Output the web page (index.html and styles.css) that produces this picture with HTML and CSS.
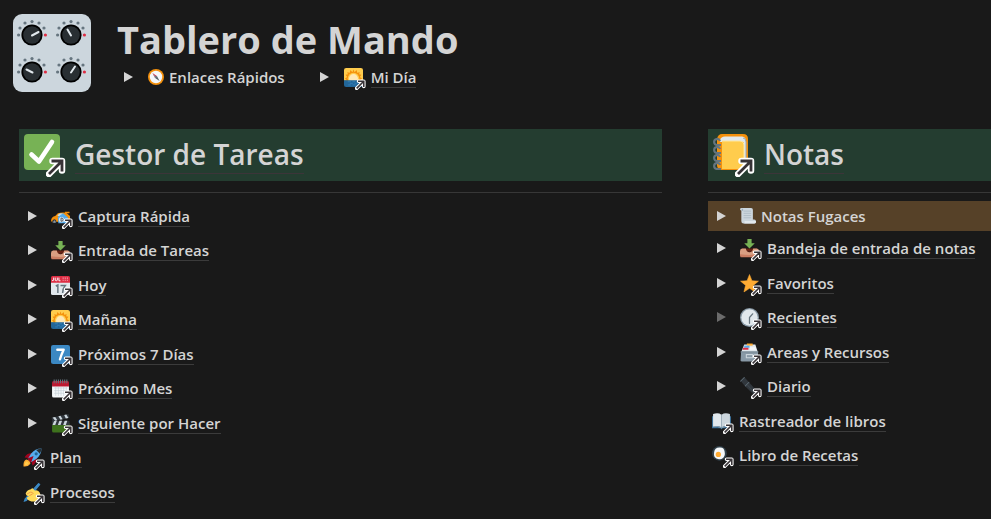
FILE: index.html
```html
<!DOCTYPE html>
<html lang="es">
<head>
<meta charset="utf-8">
<meta name="viewport" content="width=device-width, initial-scale=1">
<title>Tablero de Mando</title>
<link rel="stylesheet" href="styles.css">
</head>
<body>
<svg class="sprite" aria-hidden="true">
  <symbol id="tri" viewBox="0 0 9 10"><path d="M0 0L9 5L0 10Z" fill="currentColor"/></symbol>
  <symbol id="arrow" viewBox="0 0 20 20">
    <path d="M3 17L15.500 4.500M6.500 4H16V13.500" fill="none" stroke="#fff" stroke-width="6.500" stroke-linecap="round" stroke-linejoin="round"/>
    <path d="M3 17L15.500 4.500M5.500 4H16V14.500" fill="none" stroke="#373236" stroke-width="2.800"/>
  </symbol>
  <symbol id="dial" viewBox="-15 -15 30 30">
    <g fill="#66757f"><circle cx="-13.400" cy="0" r="1.600"/><circle cx="-12" cy="-7" r="1.600"/><circle cx="-7" cy="-12" r="1.600"/><circle cx="0" cy="-13.400" r="1.600"/><circle cx="7" cy="-12" r="1.600"/><circle cx="12" cy="-7" r="1.600"/></g>
    <circle cx="13.400" cy="0" r="1.600" fill="#dd2e44"/>
    <circle r="10.600"/><circle r="8.800" fill="#292f33"/>
  </symbol>
  <symbol id="compass" viewBox="0 0 36 36">
    <circle cx="18" cy="18" r="18" fill="#f4900c"/><circle cx="18" cy="18" r="14" fill="#f5f8fa"/>
    <path d="M10 9L20 16L16 20Z" fill="#dd2e44"/><path d="M26 27L20 16L16 20Z" fill="#55606a"/><path d="M10 9L18 18L16 20Z" fill="#8899a6"/><circle cx="18" cy="18" r="2" fill="#66757f"/>
  </symbol>
  <symbol id="sunrise" viewBox="0 0 36 36">
    <path d="M4 0H32Q36 0 36 4V24H0V4Q0 0 4 0Z" fill="#ffcc4d"/>
    <path d="M18 3L20 8L24 4L25 9L30 8L28.500 12L33 13L30 17L34 20L30 24H6L2 20L6 17L3 13L7.500 12L6 8L11 9L12 4L16 8Z" fill="#f4900c"/>
    <circle cx="18" cy="20" r="11" fill="#ffcc4d"/><circle cx="18" cy="20" r="8.500" fill="#ffe8b6"/>
    <path d="M0 23H36V32Q36 36 32 36H4Q0 36 0 32Z" fill="#226699"/>
    <path d="M7 26H13M16 26H21M24 26H29M11 29H17M20 29H25M8 32H13M16 32H22" stroke="#55acee" stroke-opacity=".6"/>
  </symbol>
  <symbol id="check" viewBox="0 0 36 36">
    <rect width="36" height="36" rx="4" fill="#77b255"/>
    <path d="M7.500 20.500L15 27.500L28 8" fill="none" stroke="#fff" stroke-width="4.600" stroke-linecap="round" stroke-linejoin="round"/>
  </symbol>
  <symbol id="notebook" viewBox="0 0 36 36">
    <path d="M9 0H30Q35 0 35 5V31Q35 36 30 36H9Q4 36 4 31V5Q5 0 9 0Z" fill="#f4900c"/>
    <path d="M12 2.500H29Q33 3 33 7V32Q33 34 31 34V8H9Q6 8 7 6Q8 2.500 12 2.500Z" fill="#e1e8ed"/>
    <path d="M9 7H27Q31 7 31 11V35H9Z" fill="#ffcc4d"/><path d="M9 7H27Q31 7 31 11V31" fill="none" stroke="#ffe8a0"/>
    <path d="M30 4Q33 4 33 8V31" stroke="#99aab5" fill="none"/>
    <path id="ring" d="M7 7A3 3 0 1 0 4 11H8" fill="none" stroke="#66757f" stroke-width="2.200"/>
    <use href="#ring" y="8"/><use href="#ring" y="16"/><use href="#ring" y="24"/>
  </symbol>
  <symbol id="car" viewBox="0 0 36 36">
    <path d="M0 26Q1 18 8 17L13 12Q21 9 29 11L36 17V27Q26 30 13 28L2 29Z" fill="#f4900c"/>
    <path d="M12 17L15 13Q19 11 23 13L21 17Z" fill="#bbddf5"/>
    <path d="M13 19L23 12L32 20V31H14Z" fill="#55acee"/><circle cx="20" cy="24" r="5" fill="#e1e8ed"/><path d="M19 21H20Q23 21 23 24Q23 27 20 27H19Z" fill="none" stroke="#31373d" stroke-width="1.500"/>
    <path d="M2 30Q2 23 7 23Q11 24 10 30Z" fill="#31373d"/><path d="M4 30Q4 26 7 25Q9 26 9 30Z" fill="#8899a6"/><path d="M26 9H35V12H27Z" fill="#f4900c"/>
  </symbol>
  <symbol id="inbox" viewBox="0 0 36 36">
    <path d="M4 18H32L36 24H0Z" fill="#662113"/>
    <path d="M0 23Q0 18 4 18H11Q12 25 18 25Q24 25 25 18H32Q36 18 36 23V31Q36 34 33 34H3Q0 34 0 31Z" fill="#d99e82"/>
    <path d="M0 29Q18 32 36 29V32Q36 35 33 35H3Q0 35 0 32Z" fill="#c1694f" fill-opacity=".6"/>
    <path d="M14 0H22V8H28L18 18L8 8H14Z" fill="#77b255"/>
  </symbol>
  <symbol id="calendar" viewBox="0 0 36 36">
    <path d="M0 11H36V33Q36 36 33 36H3Q0 36 0 33Z" fill="#e1e8ed"/><path d="M3 0H33Q36 0 36 3V13H0V3Q0 0 3 0Z" fill="#dd2e44"/>
    <path d="M5 3V8Q4 10 2 8M8 3V8Q10 10 12 8V3M15 3V9H18" fill="none" stroke="#f5f8fa" stroke-width="1.800"/>
    <path d="M22 4H34M22 8H34" stroke="#f4abba" stroke-width="2" stroke-dasharray="2 2"/>
    <path d="M9 19L13 17V32M18 18H27Q22 24 22 32" fill="none" stroke="#66757f" stroke-width="2.800"/>
  </symbol>
  <symbol id="seven" viewBox="0 0 36 36">
    <rect width="36" height="36" rx="4" fill="#3b88c3"/><path d="M12 9H24Q20 17 17 27" fill="none" stroke="#fff" stroke-width="4.500" stroke-linecap="round" stroke-linejoin="round"/>
  </symbol>
  <symbol id="spiral" viewBox="0 0 36 36">
    <path d="M2 12H34V32Q34 35 31 35H5Q2 35 2 32Z" fill="#f5f8fa"/><path d="M5 4H31Q34 4 34 7V14H2V7Q2 4 5 4Z" fill="#be1931"/>
    <path d="M6 17H31M6 22H31M6 27H31M9 15V32M14 15V32M19 15V32M24 15V32M29 15V32" stroke="#c3ced6" stroke-width="1.200"/>
    <path d="M6 1V8M10 1V8M14 1V8M18 1V8M22 1V8M26 1V8M30 1V8" stroke="#66757f" stroke-width="2"/>
  </symbol>
  <symbol id="clapper" viewBox="0 0 36 36">
    <path d="M2 17H35V32Q35 35 32 35H5Q2 35 2 32Z" fill="#3e721d"/><path d="M2 13H35V21H2Z" fill="#31373d"/><path d="M6 13L3 21H8L11 13ZM16 13L13 21H18L21 13ZM26 13L23 21H28L31 13Z" fill="#ccd6dd"/>
    <path d="M1 7L33 0L35 7L3 14Z" fill="#31373d"/><path d="M3 6.500L8 13L12 12L8 5.500ZM14 4.300L18 10.800L22 10L18 3.300ZM25 2L28 8.500L33 7.500L29 1Z" fill="#ccd6dd"/>
  </symbol>
  <symbol id="rocket" viewBox="0 0 36 36">
    <path d="M3 18Q7 9 18 10L26 19Q26 29 18 33L16 25L10 19Z" fill="#a0041e"/>
    <path d="M35 1Q23 1 15 11L9 21L15 27L25 21Q35 13 35 1Z" fill="#55acee"/><path d="M35 1Q30 1 25 4L32 11Q35 6 35 1Z" fill="#292f33"/>
    <circle cx="25" cy="11" r="3" fill="#226699"/><path d="M8 20L20 15Q17 23 15 28Z" fill="#a0041e"/>
    <path d="M1 35Q0 25 6 22Q13 23 14 30Q10 36 1 35Z" fill="#ffac33"/><path d="M3 33Q3 27 7 25Q11 27 11 30Q8 33 3 33Z" fill="#ffcc4d"/>
  </symbol>
  <symbol id="writing" viewBox="0 0 36 36">
    <path d="M29 0L32 3L7 34L1 36L3 30Z" fill="#3b88c3"/>
    <path d="M5 20Q8 13 15 12Q18 8 20 12L29 15Q35 20 33 31L29 35H16Q8 33 7 28L12 24Q6 26 5 20Z" fill="#ffdc5d"/>
    <path d="M7 21L15 17L20 20M12 24L18 21" stroke="#ef9645" stroke-width="1.700" fill="none"/><path d="M20 11L30 0L33 3L23 15Z" fill="#3b88c3"/>
  </symbol>
  <symbol id="scroll" viewBox="0 0 36 36">
    <path d="M4 0H25Q29 0 29 4V26H32Q36 26 36 31Q36 35 32 35H8Q3 35 3 30V6Q0 5 0 3Q0 0 4 0Z" fill="#ccd6dd"/>
    <path d="M10 29H36Q37 35 32 35H8Q12 34 10 29Z" fill="#e1e8ed"/><path d="M8 7H25M8 12H25M8 17H25M8 22H25" stroke="#a9b8c2" stroke-width="1.800"/><path d="M3 6H7Q8 3 5 1" fill="#99aab5"/>
  </symbol>
  <symbol id="star" viewBox="0 0 36 36"><path d="M18 1L22.700 12.600L35 13.500L25.500 21.500L28.500 34L18 27.200L7.500 34L10.500 21.500L1 13.500L13.300 12.600Z" fill="#ffac33" stroke="#ffac33" stroke-linejoin="round"/></symbol>
  <symbol id="clock" viewBox="0 0 36 36">
    <circle cx="18" cy="18" r="18" fill="#8899a6"/><circle cx="18" cy="18" r="15.500" fill="#e1e8ed"/><path d="M24 11L18 18V29" fill="none" stroke="#66757f" stroke-width="2.400" stroke-linecap="round" stroke-linejoin="round"/>
  </symbol>
  <symbol id="cardbox" viewBox="0 0 36 36">
    <path d="M8 3H29L34 18H2Z" fill="#e1e8ed"/><path d="M13 1H24V5H13Z" fill="#ffac33"/><path d="M8 5H18V9H8Z" fill="#55acee"/><path d="M6 9H16V13H5Z" fill="#dd2e44"/><path d="M19 8H30V13H19Z" fill="#f5f8fa"/>
    <path d="M2 16H34L35 33Q35 35 32 35H4Q1 35 1 33Z" fill="#8899a6"/><path d="M1 16H35V18H1Z" fill="#788994"/><rect x="11" y="21" width="14" height="8" rx="1" fill="#ccd6dd"/><path d="M13 23H23V27H13Z" fill="#8899a6"/>
  </symbol>
  <symbol id="torch" viewBox="0 0 36 36">
    <path d="M1 7L8 0L17 10L33 28L27 34L10 18Z" fill="#31373d"/><path d="M0 8L8 0L9 1L1 9Z" fill="#66757f"/><path d="M9 17L17 9L18 10L10 18Z" fill="#66757f"/><path d="M14 15L28 31" stroke="#3c454c" stroke-width="2"/>
  </symbol>
  <symbol id="book" viewBox="0 0 36 36">
    <path d="M0 8H36V31H20L18 33L16 31H0Z" fill="#3b6f97"/><path d="M2 4Q11 0 18 5V29Q10 25 2 28Z" fill="#e1e8ed"/><path d="M34 4Q25 0 18 5V29Q26 25 34 28Z" fill="#ccd6dd"/><path d="M18 5V29M2 28Q11 26 18 30Q25 26 34 28" fill="none" stroke="#99aab5" stroke-width="1.500"/>
  </symbol>
  <symbol id="egg" viewBox="0 0 36 36">
    <path d="M22 22L34 34" stroke="#292f33" stroke-width="5"/><circle cx="14" cy="14" r="14" fill="#31414b"/><path d="M4 12Q5 3 14 3Q23 2 24 11Q26 20 19 24Q9 27 5 21Q3 17 4 12Z" fill="#f5f8fa"/><circle cx="12" cy="16" r="5" fill="#ffac33"/>
  </symbol>
</svg>

<header class="top">
  <svg class="cover" viewBox="0 0 78 78" aria-hidden="true">
    <rect width="78" height="78" rx="9" fill="#ccd6dd"/>
    <use href="#dial" x="4" y="6" width="30" height="30"/><use href="#dial" x="43" y="6" width="30" height="30"/>
    <use href="#dial" x="4" y="43" width="30" height="30"/><use href="#dial" x="43" y="43" width="30" height="30"/>
    <path d="M19 21.500L25.500 18M58 21.500L54.500 15.500M19.500 58.500L13.500 55.500M58 58.500L62 52.500" stroke="#e1e8ed" stroke-width="2" stroke-linecap="round"/>
  </svg>
  <div class="intro">
    <h1>Tablero de Mando</h1>
    <nav class="quick">
      <div class="item"><button class="toggle" aria-label="Desplegar Enlaces Rápidos"><svg><use href="#tri"/></svg></button><svg class="inline-icon" aria-hidden="true"><use href="#compass"/></svg><span class="label">Enlaces Rápidos</span></div>
      <div class="item"><button class="toggle" aria-label="Desplegar Mi Día"><svg><use href="#tri"/></svg></button><a href="#"><span class="icon"><svg><use href="#sunrise"/></svg><svg class="badge"><use href="#arrow"/></svg></span><span class="label">Mi Día</span></a></div>
    </nav>
  </div>
</header>

<main class="columns">
  <section>
    <h2><a href="#"><span class="icon"><svg><use href="#check"/></svg><svg class="badge"><use href="#arrow"/></svg></span><span class="label">Gestor de Tareas</span></a></h2>
    <ul class="list">
      <li class="item"><button class="toggle" aria-label="Desplegar Captura Rápida"><svg><use href="#tri"/></svg></button><a href="#"><span class="icon"><svg><use href="#car"/></svg><svg class="badge"><use href="#arrow"/></svg></span><span class="label">Captura Rápida</span></a></li>
      <li class="item"><button class="toggle" aria-label="Desplegar Entrada de Tareas"><svg><use href="#tri"/></svg></button><a href="#"><span class="icon"><svg><use href="#inbox"/></svg><svg class="badge"><use href="#arrow"/></svg></span><span class="label">Entrada de Tareas</span></a></li>
      <li class="item"><button class="toggle" aria-label="Desplegar Hoy"><svg><use href="#tri"/></svg></button><a href="#"><span class="icon"><svg><use href="#calendar"/></svg><svg class="badge"><use href="#arrow"/></svg></span><span class="label">Hoy</span></a></li>
      <li class="item"><button class="toggle" aria-label="Desplegar Mañana"><svg><use href="#tri"/></svg></button><a href="#"><span class="icon"><svg><use href="#sunrise"/></svg><svg class="badge"><use href="#arrow"/></svg></span><span class="label">Mañana</span></a></li>
      <li class="item"><button class="toggle" aria-label="Desplegar Próximos 7 Días"><svg><use href="#tri"/></svg></button><a href="#"><span class="icon"><svg><use href="#seven"/></svg><svg class="badge"><use href="#arrow"/></svg></span><span class="label">Próximos 7 Días</span></a></li>
      <li class="item"><button class="toggle" aria-label="Desplegar Próximo Mes"><svg><use href="#tri"/></svg></button><a href="#"><span class="icon"><svg><use href="#spiral"/></svg><svg class="badge"><use href="#arrow"/></svg></span><span class="label">Próximo Mes</span></a></li>
      <li class="item"><button class="toggle" aria-label="Desplegar Siguiente por Hacer"><svg><use href="#tri"/></svg></button><a href="#"><span class="icon"><svg><use href="#clapper"/></svg><svg class="badge"><use href="#arrow"/></svg></span><span class="label">Siguiente por Hacer</span></a></li>
      <li class="item"><a href="#"><span class="icon"><svg><use href="#rocket"/></svg><svg class="badge"><use href="#arrow"/></svg></span><span class="label">Plan</span></a></li>
      <li class="item"><a href="#"><span class="icon"><svg><use href="#writing"/></svg><svg class="badge"><use href="#arrow"/></svg></span><span class="label">Procesos</span></a></li>
    </ul>
  </section>
  <section>
    <h2><a href="#"><span class="icon"><svg><use href="#notebook"/></svg><svg class="badge"><use href="#arrow"/></svg></span><span class="label">Notas</span></a></h2>
    <ul class="list">
      <li class="item highlight"><button class="toggle" aria-label="Desplegar Notas Fugaces"><svg><use href="#tri"/></svg></button><svg class="inline-icon" aria-hidden="true"><use href="#scroll"/></svg><span class="label">Notas Fugaces</span></li>
      <li class="item"><button class="toggle" aria-label="Desplegar Bandeja de entrada de notas"><svg><use href="#tri"/></svg></button><a href="#"><span class="icon"><svg><use href="#inbox"/></svg><svg class="badge"><use href="#arrow"/></svg></span><span class="label">Bandeja de entrada de notas</span></a></li>
      <li class="item"><button class="toggle" aria-label="Desplegar Favoritos"><svg><use href="#tri"/></svg></button><a href="#"><span class="icon"><svg><use href="#star"/></svg><svg class="badge"><use href="#arrow"/></svg></span><span class="label">Favoritos</span></a></li>
      <li class="item"><button class="toggle empty" aria-label="Desplegar Recientes"><svg><use href="#tri"/></svg></button><a href="#"><span class="icon"><svg><use href="#clock"/></svg><svg class="badge"><use href="#arrow"/></svg></span><span class="label">Recientes</span></a></li>
      <li class="item"><button class="toggle" aria-label="Desplegar Areas y Recursos"><svg><use href="#tri"/></svg></button><a href="#"><span class="icon"><svg><use href="#cardbox"/></svg><svg class="badge"><use href="#arrow"/></svg></span><span class="label">Areas y Recursos</span></a></li>
      <li class="item"><button class="toggle" aria-label="Desplegar Diario"><svg><use href="#tri"/></svg></button><a href="#"><span class="icon"><svg><use href="#torch"/></svg><svg class="badge"><use href="#arrow"/></svg></span><span class="label">Diario</span></a></li>
      <li class="item"><a href="#"><span class="icon"><svg><use href="#book"/></svg><svg class="badge"><use href="#arrow"/></svg></span><span class="label">Rastreador de libros</span></a></li>
      <li class="item"><a href="#"><span class="icon"><svg><use href="#egg"/></svg><svg class="badge"><use href="#arrow"/></svg></span><span class="label">Libro de Recetas</span></a></li>
    </ul>
  </section>
</main>
</body>
</html>
```

FILE: styles.css
```css
* { box-sizing: border-box; }

body {
  margin: 0;
  background: #191919;
  color: #d4d4d4;
  font: 600 15px/20px "Open Sans", "Noto Sans", sans-serif;
}

.sprite { position: absolute; width: 0; height: 0; }

svg { display: block; }
a { color: inherit; text-decoration: none; }
h1, h2, ul { margin: 0; padding: 0; }

.top {
  display: flex;
  gap: 26px;
  padding: 14px 13px 0;
}

.cover { flex: none; width: 78px; height: 78px; }

h1 {
  font-size: 38px;
  line-height: 51px;
  font-weight: 700;
}

.quick { display: flex; gap: 31px; padding-left: 3px; }

.columns {
  display: grid;
  grid-template-columns: minmax(0, 643fr) minmax(0, 283fr);
  gap: 46px;
  padding: 37px 0 0 19px;
}

.item { display: flex; align-items: center; }
.item > a, h2 > a { display: flex; align-items: center; gap: 8px; }

.icon { position: relative; flex: none; width: 19px; height: 19px; }
.icon svg { width: 100%; height: 100%; }
.icon .badge {
  position: absolute;
  right: -3px;
  bottom: -3px;
  width: 11px;
  height: 11px;
}

.label { white-space: nowrap; }
a .label { border-bottom: 1px solid #3b3b3b; }

.toggle {
  flex: none;
  width: 28px;
  height: 24px;
  padding: 0 0 0 5px;
  border: 0;
  background: none;
  color: inherit;
}
.toggle svg { width: 9px; height: 10px; }
.quick .toggle { padding-left: 4px; }
.toggle.empty { color: #6b6b6b; }

.inline-icon { flex: none; width: 16px; height: 16px; margin-right: 5px; }

h2 {
  padding: 5px;
  background: #243d30;
  font-size: 28px;
  line-height: 38px;
  font-weight: 600;
}
h2 > a { gap: 15px; height: 40px; }
h2 .icon { width: 36px; height: 36px; margin-bottom: 4px; }
h2 .icon .badge { right: -6px; bottom: -7px; width: 20px; height: 20px; }
h2 .label { border-color: #3c3539; }
h2 { padding-bottom: 7px; }

.list {
  list-style: none;
  margin-top: 11px;
  padding-top: 6px;
  border-top: 1px solid #373737;
}
.list .item { min-height: 34px; padding-left: 4px; }
.list .item:nth-child(even) { margin-bottom: 1px; }
.list .highlight {
  min-height: 30px;
  margin: 2px 0 0;
  background: #564128;
}
```
